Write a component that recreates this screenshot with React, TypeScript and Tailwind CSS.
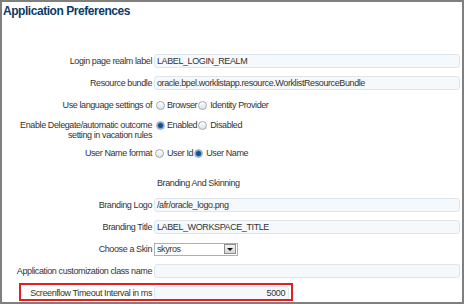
import React from "react";

const font = { fontFamily: '"Liberation Sans", Arial, sans-serif' };

function Radio({ checked }: { checked?: boolean }) {
  return (
    <span className="relative inline-flex h-[9px] w-[9px] shrink-0 items-center justify-center rounded-full border border-[#9ea9b2] bg-gradient-to-b from-[#ffffff] to-[#dde3e8]">
      {checked && (
        <span className="h-[5px] w-[5px] rounded-full bg-[#13508c] shadow-[0_0_0_1px_#7fa7cf]" />
      )}
    </span>
  );
}

function Input({ value, className = "" }: { value?: string; className?: string }) {
  return (
    <div
      className={`flex h-[14px] items-center rounded-[3px] border border-[#dde6ed] bg-[#f6f9fc] px-[2px] text-[#333] ${className}`}
    >
      {value}
    </div>
  );
}

function Row({
  label,
  children,
}: {
  label: React.ReactNode;
  children?: React.ReactNode;
}) {
  return (
    <div className="grid h-[22px] grid-cols-[150px_306px] items-center gap-x-[2px]">
      <div className="text-right">{label}</div>
      <div className="flex items-center">{children}</div>
    </div>
  );
}

export default function App() {
  return (
    <div className="h-[306px] w-[466px] bg-white" style={font}>
      <div className="h-[304px] w-[464px] border-2 border-[#7f7f7f] bg-white text-[9px] tracking-[-0.4px] text-[#333]">
        <div className="h-[18px] pl-[1px] text-[12px] font-bold leading-[18px] tracking-[-0.45px] text-[#0d3a66]">
          Application Preferences
        </div>
        <div className="mt-[30px] flex flex-col leading-[10px]">
          <Row label="Login page realm label">
            <Input value="LABEL_LOGIN_REALM" className="w-[306px]" />
          </Row>
          <Row label="Resource bundle">
            <Input value="oracle.bpel.worklistapp.resource.WorklistResourceBundle" className="w-[306px]" />
          </Row>
          <Row label="Use language settings of">
            <div className="ml-[2px] flex items-center gap-[1px]">
              <Radio />
              <span className="ml-[1px]">Browser</span>
              <Radio />
              <span className="ml-[2px]">Identity Provider</span>
            </div>
          </Row>
          <div className="grid h-[26px] grid-cols-[150px_306px] items-start gap-x-[2px] pt-[4px]">
            <div className="text-right leading-[10px]">
              Enable Delegate/automatic outcome
              <br />
              setting in vacation rules
            </div>
            <div className="ml-[2px] flex h-[10px] items-center gap-[1px]">
              <Radio checked />
              <span className="ml-[1px]">Enabled</span>
              <Radio />
              <span className="ml-[2px]">Disabled</span>
            </div>
          </div>
          <Row label="User Name format">
            <div className="ml-[1px] flex items-center gap-[1px]">
              <Radio />
              <span className="ml-[2px]">User Id</span>
              <Radio checked />
              <span className="ml-[2px]">User Name</span>
            </div>
          </Row>
          <div className="h-[8px]" />
          <Row label="">
            <span className="ml-[3px]">Branding And Skinning</span>
          </Row>
          <Row label="Branding Logo">
            <Input value="/afr/oracle_logo.png" className="w-[306px]" />
          </Row>
          <Row label="Branding Title">
            <Input value="LABEL_WORKSPACE_TITLE" className="w-[306px]" />
          </Row>
          <Row label="Choose a Skin">
            <div className="flex h-[13px] w-[84px] items-center justify-between border border-[#a9b0b6] bg-white pl-[2px] pr-[1px]">
              <span>skyros</span>
              <span className="flex h-[10px] w-[12px] items-center justify-center border border-[#8a8f94] bg-gradient-to-b from-[#f4f4f4] to-[#d6d6d6]">
                <span className="h-0 w-0 border-x-[3px] border-t-[3px] border-x-transparent border-t-[#111]" />
              </span>
            </div>
          </Row>
          <Row label="Application customization class name">
            <Input className="w-[306px]" />
          </Row>
          <div className="relative">
            <Row label="Screenflow Timeout Interval in ms">
              <Input value="5000" className="w-[135px] justify-end pr-[3px]" />
            </Row>
            <div className="pointer-events-none absolute left-[17px] top-[1px] h-[18px] w-[274px] border-2 border-[#e32020]" />
          </div>
        </div>
      </div>
    </div>
  );
}
